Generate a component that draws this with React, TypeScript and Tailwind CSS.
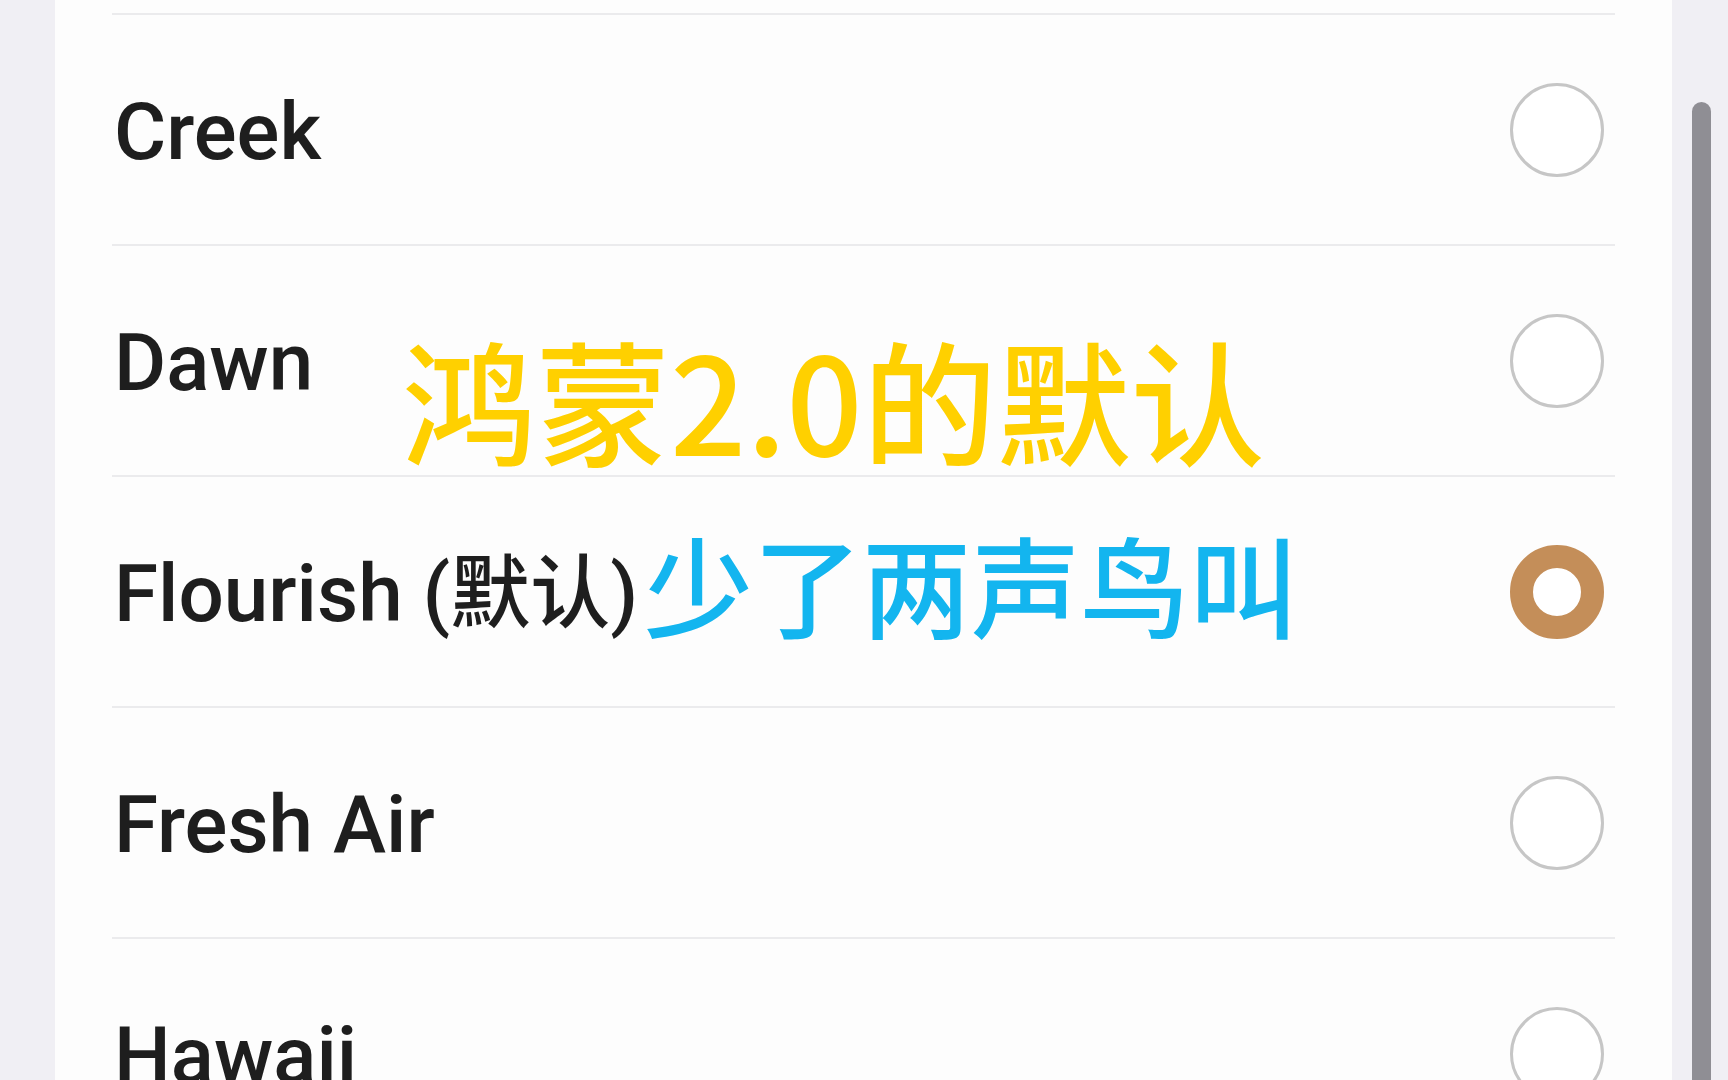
import { useState } from 'react'

// Ringtone picker: a scrolled list of tones with radio circles, plus the
// two caption lines laid over the list.

const TONES = ['Creek', 'Dawn', 'Flourish (默认)', 'Fresh Air', 'Hawaii']

function Radio({ checked }: { checked: boolean }) {
  return checked ? (
    <span className="block h-[94px] w-[94px] rounded-full border-[23px] border-[#c48e59] bg-white" />
  ) : (
    <span className="block h-[94px] w-[94px] rounded-full border-[3px] border-[#c6c6c6] bg-white" />
  )
}

export default function App() {
  const [selected, setSelected] = useState('Flourish (默认)')

  return (
    <div className="flex h-[1080px] w-full overflow-hidden bg-[#f0eff4] font-['Roboto','Noto_Sans_CJK_SC',sans-serif]">
      <div className="w-[55px] shrink-0" />

      <div className="relative flex-1 overflow-hidden bg-[#fdfdfd] px-[57px] pt-[13px]">
        <ul>
          {TONES.map((tone) => (
            <li key={tone}>
              <button
                type="button"
                onClick={() => setSelected(tone)}
                className="flex h-[231px] w-full items-center justify-between border-t-2 border-[#ebebed] pl-[2px] pr-[11px] text-left"
              >
                <span className="pt-[4px] text-[80px] leading-none font-medium text-[#1e1e1e]">{tone}</span>
                <Radio checked={selected === tone} />
              </button>
            </li>
          ))}
        </ul>

        {/* caption overlay */}
        <div className="pointer-events-none absolute top-[331px] left-[347px] font-['Noto_Sans_CJK_SC',sans-serif] text-[134px] leading-none font-medium whitespace-nowrap text-[#ffd000]">
          鸿蒙2.0的默认
        </div>
        <div className="pointer-events-none absolute top-[528px] left-[589px] font-['Noto_Sans_CJK_SC',sans-serif] text-[109px] leading-none font-medium whitespace-nowrap text-[#13b5ef]">
          少了两声鸟叫
        </div>
      </div>

      <div className="flex w-[56px] shrink-0 flex-col pt-[102px] pl-[20px]">
        <div className="w-[19px] flex-1 rounded-t-full bg-[#8f8e94]" />
      </div>
    </div>
  )
}
